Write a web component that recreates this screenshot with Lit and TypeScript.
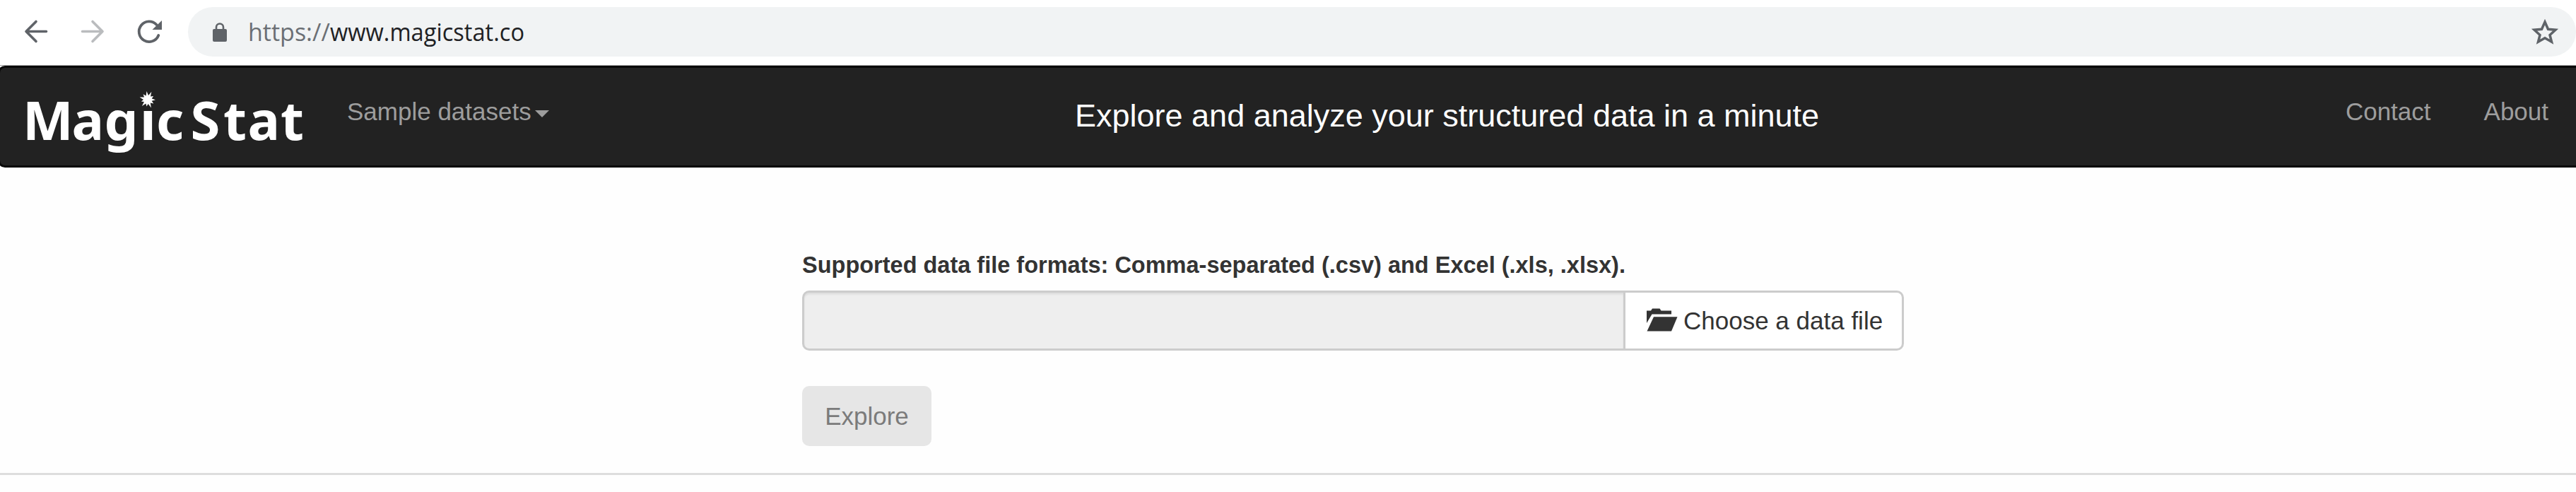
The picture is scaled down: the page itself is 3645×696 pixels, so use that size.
import { LitElement, html, css, svg } from "lit";
import { customElement } from "lit/decorators.js";

// Eleven-ray spark that replaces the dot of the "i" in the logo.
const spark = (() => {
  const outer = [12.5, 9.5, 11, 10, 12.5, 9.5, 12, 9.5, 12, 10, 12];
  const n = outer.length;
  const pts: string[] = [];
  for (let i = 0; i < n; i++) {
    const a = -Math.PI / 2 + 0.45 + (i * 2 * Math.PI) / n;
    const b = a + Math.PI / n;
    pts.push(`${(209 + outer[i] * Math.cos(a)).toFixed(1)},${(48 + outer[i] * Math.sin(a)).toFixed(1)}`);
    pts.push(`${(209 + 6 * Math.cos(b)).toFixed(1)},${(48 + 6 * Math.sin(b)).toFixed(1)}`);
  }
  return pts.join(" ");
})();

@customElement("browser-bar")
class BrowserBar extends LitElement {
  static styles = css`
    :host { display: flex; height: 92px; box-sizing: border-box; padding-top: 10px; background: #fff; }
    .tools { width: 266px; height: 70px; flex: none; }
    .omnibox { flex: 1; height: 70px; border-radius: 35px; background: #f1f3f4; display: flex; align-items: center; }
    .lock { width: 76px; height: 70px; flex: none; }
    .url { flex: 1; font: 35px/70px "Open Sans", sans-serif; white-space: pre; }
    .text { width: 430px; height: 70px; display: block; }
    .scheme { fill: #6b6f74; }
    .host { fill: #202124; }
    .star { width: 88px; height: 70px; flex: none; }
  `;
  render() {
    return html`
      <svg class="tools" viewBox="0 10 266 70" fill="none" stroke-width="3.6">
        <path d="M65.500 44.500H37M51 30.500L37 44.500L51 58.500" stroke="#5f6368" stroke-linecap="round" stroke-linejoin="round" />
        <path d="M116.500 44.500H145M131 30.500L145 44.500L131 58.500" stroke="#babcbe" stroke-linecap="round" stroke-linejoin="round" />
        <path d="M224.300 50A14.300 14.300 0 1 1 221.500 35" stroke="#5f6368" stroke-width="3.800" stroke-linecap="round" />
        <path d="M229 29V42H215.500Z" fill="#5f6368" />
      </svg>
      <div class="omnibox">
        <svg class="lock" viewBox="266 10 76 70">
          <rect x="301" y="41" width="20" height="18" rx="2" fill="#5f6368" />
          <path d="M306 42V38.500a5 5 0 0 1 10 0V42" fill="none" stroke="#5f6368" stroke-width="2.600" />
        </svg>
        <div class="url">
          <svg class="text" viewBox="0 0 430 70">
            <text class="scheme" x="9" y="48" textLength="116" lengthAdjust="spacingAndGlyphs">https://</text>
            <text class="host" x="125" y="48" textLength="275" lengthAdjust="spacingAndGlyphs">www.magicstat.co</text>
          </svg>
        </div>
        <svg class="star" viewBox="3557 10 88 70">
          <path d="M3601 31L3605.500 41.300L3616 42.200L3608 49.500L3610.500 59.200L3601 53.700L3591.500 59.200L3594 49.500L3586 42.200L3596.500 41.300Z" fill="none" stroke="#5f6368" stroke-width="3.500" />
        </svg>
      </div>
    `;
  }
}

@customElement("site-nav")
class SiteNav extends LitElement {
  static styles = css`
    :host { display: block; border-top: 1px solid #a0a0a0; font-family: "Liberation Sans", Arial, sans-serif; }
    .bar { box-sizing: border-box; height: 144px; margin-left: -3px; margin-right: -10px; padding-right: 10px; background: #222; border: 3px solid #080808; border-radius: 10px; display: flex; }
    .logo { width: 491px; height: 138px; flex: none; display: block; }
    .word { font-family: "Noto Sans", sans-serif; font-weight: 700; font-size: 76px; fill: #fff; }
    .link { font-size: 35px; line-height: 50px; color: #9d9d9d; padding-top: 37px; white-space: nowrap; }
    .drop { display: flex; width: 1030px; flex: none; }
    .caret { width: 0; height: 0; margin: 23px 0 0 5px; border: 10px solid transparent; border-top-color: #9d9d9d; border-bottom: 0; }
    .title { font-size: 45px; line-height: 50px; color: #fff; padding-top: 43px; flex: 1; white-space: nowrap; }
    .links { display: flex; gap: 75px; padding-right: 36px; }
  `;
  render() {
    return html`
      <div class="bar">
        <svg class="logo" viewBox="0 3 491 138">
          <text class="word" y="105" x="32 101.500 147.500 198 221 269.500 316 350.500 397">MagıcStat</text>
          ${svg`<polygon points=${spark} fill="#fff" />`}
        </svg>
        <div class="link drop"><span>Sample datasets</span><span class="caret"></span></div>
        <div class="title">Explore and analyze your structured data in a minute</div>
        <div class="links"><span class="link">Contact</span><span class="link">About</span></div>
      </div>
    `;
  }
}

@customElement("upload-form")
class UploadForm extends LitElement {
  static styles = css`
    :host { display: block; box-sizing: border-box; height: 435px; padding: 113px 951px 0 1135px; border-bottom: 3px solid #ddd; font: 35px/50px "Liberation Sans", Arial, sans-serif; color: #333; }
    .label { display: block; font-weight: 700; font-size: 32.500px; line-height: 50px; height: 61px; white-space: nowrap; }
    .group { display: flex; height: 85px; }
    .field { box-sizing: border-box; width: 1162px; height: 85px; background: #eee; border: 3px solid #ccc; border-right: 0; border-radius: 10px 0 0 10px; box-shadow: inset 0 2.500px 2.500px rgba(0, 0, 0, 0.075); }
    .choose { box-sizing: border-box; flex: 1; height: 85px; border: 3px solid #ccc; border-radius: 0 10px 10px 0; display: flex; padding: 15px 0 0 30px; white-space: nowrap; background: #fff; }
    .folder { width: 44px; height: 34px; margin: 7px 8px 0 0; flex: none; }
    .explore { box-sizing: border-box; width: 183px; height: 85px; margin-top: 50px; border-radius: 10px; background: #e6e6e6; color: #7b7b7b; text-align: center; line-height: 86px; }
  `;
  render() {
    return html`
      <label class="label">Supported data file formats: Comma-separated (.csv) and Excel (.xls, .xlsx).</label>
      <div class="group">
        <div class="field"></div>
        <div class="choose">
          <svg class="folder" viewBox="0 0 44 34" fill="#333">
            <path d="M0 21V3.500H6L8 0.500H18.500L20.500 3.500H35V8.500H7.500Z" />
            <path d="M10 12.300H43.500L35 32.500H0.500Z" />
          </svg>
          <span>Choose a data file</span>
        </div>
      </div>
      <div class="explore">Explore</div>
    `;
  }
}

@customElement("app-root")
class AppRoot extends LitElement {
  static styles = css`
    :host { display: block; height: 696px; overflow: hidden; background: #fefefe; }
  `;
  render() {
    return html`<browser-bar></browser-bar><site-nav></site-nav><upload-form></upload-form>`;
  }
}
